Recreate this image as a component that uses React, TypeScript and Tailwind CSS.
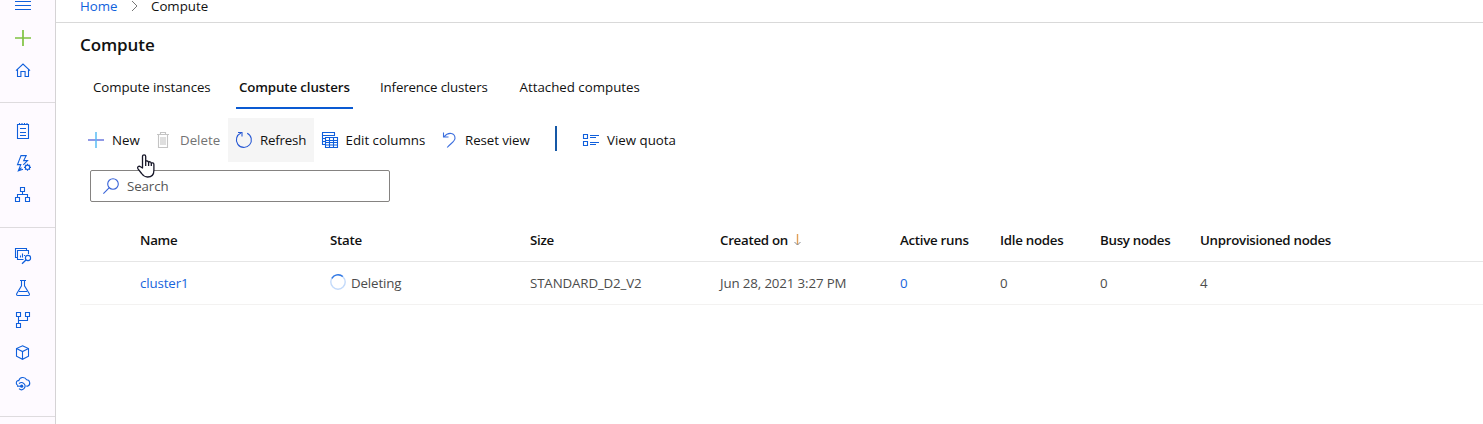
import type { ReactNode } from "react";

type IconProps = { children: ReactNode; className?: string };

function Icon({ children, className = "text-[#0f5fdc]" }: IconProps) {
  return (
    <svg
      width="16"
      height="16"
      viewBox="0 0 16 16"
      fill="none"
      stroke="currentColor"
      strokeWidth="1.1"
      className={`block shrink-0 overflow-visible ${className}`}
    >
      {children}
    </svg>
  );
}

const HomeIcon = () => (
  <Icon>
    <path d="M1 8.7 8 2l7 6.7M2.5 7.5v7h3.4V9.5h4.2v5h3.4v-7" />
  </Icon>
);

const NotebookIcon = () => (
  <Icon>
    <path d="M2.5 1.5h11v14h-11zM5 5.5h6M5 9.5h6M5 12.5h6" />
    <path d="M4.5 0v2M7 0v2M9.5 0v2M12 0v2" />
  </Icon>
);

const BoltIcon = () => (
  <Icon>
    <path d="M8 14.2 3.3 15.8 5.8 9.6H2.5L6 .6h5.2L8.7 5.6h3.8L8.3 9.8M3.3 15.8l3.2-3.2" />
    <circle cx="12.5" cy="12.3" r="2.2" />
    <path
      d="M12.5 8.8v1.3M12.5 14.5v1.3M9 12.3h1.3M14.7 12.3H16M10.1 9.9l.8.8M14.1 13.9l.8.8M10.1 14.7l.8-.8M14.1 10.7l.8-.8"
      strokeWidth="1.2"
    />
  </Icon>
);

const TreeIcon = () => (
  <Icon>
    <path d="M5.5.5h4v4h-4zM.5 10.5h4v4h-4zM10.5 10.5h4v4h-4zM7.5 4.5v3M2.5 10.5v-3h10v3" />
  </Icon>
);

const DataIcon = () => (
  <Icon>
    <path d="M2 9.5H.5v-9h11V2M8.5 11.5h-6v-9h11V6M5.5 9.5v-2M7.5 9.5v-4M9.5 8V7" />
    <circle cx="13" cy="10" r="2.6" />
    <path d="M11.2 11.8 7 15.8" strokeWidth="1.3" />
  </Icon>
);

const FlaskIcon = () => (
  <Icon>
    <path d="M5 .5h6M6.5.5v5.3L1.7 13.7q-.6 1.8 1.2 1.8h10.2q1.8 0 1.2-1.8L9.5 5.8V.5M4 11.5h8" />
  </Icon>
);

const PipelineIcon = () => (
  <Icon>
    <path d="M1.5.5h4v4h-4zM10.5.5h4v4h-4zM1.5 11.5h4v4h-4zM3.5 4.5v7M3.5 8.5h9v-4" />
  </Icon>
);

const CubeIcon = () => (
  <Icon>
    <path d="m7.5 1.8 6 2.8v7.6l-6 3.1-6-3.1V4.6zM1.5 4.6l6 3 6-3M7.5 7.6v7.7" />
  </Icon>
);

const CloudIcon = () => (
  <Icon>
    <path d="M3.2 9.5H3A2.6 2.6 0 0 1 3 4.6h.8a4.2 4.2 0 0 1 7.8-.8 3.3 3.3 0 0 1 1.2 6.3h-1.5" />
    <path d="M4 7.7a3.5 3.5 0 1 1 0 5" />
    <path d="M2 10.2h5" />
    <circle cx="6.7" cy="10.2" r="1.6" fill="currentColor" stroke="none" />
  </Icon>
);

function NavItem({ children }: { children: ReactNode }) {
  return <div className="flex h-8 items-center pl-[15px]">{children}</div>;
}

function Sidebar() {
  return (
    <nav className="flex h-full w-14 shrink-0 flex-col border-r border-[#d5d3d5] bg-[#fefaff]">
      <div className="h-[22px] pl-[15px]">
        <svg width="16" height="11" viewBox="0 0 16 11" className="block" stroke="#0f5fdc">
          <path d="M0 1.5h16M0 5.5h16M0 9.5h16" />
        </svg>
      </div>
      <div className="h-[81px] border-b border-[#dedbde]">
        <NavItem>
          <Icon className="text-[#7fc241]">
            <path d="M8 0v16M0 8h16" strokeWidth="1.7" />
          </Icon>
        </NavItem>
        <NavItem><HomeIcon /></NavItem>
      </div>
      <div className="h-[125px] border-b border-[#dedbde] pt-3">
        <NavItem><NotebookIcon /></NavItem>
        <NavItem><BoltIcon /></NavItem>
        <NavItem><TreeIcon /></NavItem>
      </div>
      <div className="h-[189px] border-b border-[#dedbde] pt-3">
        <NavItem><DataIcon /></NavItem>
        <NavItem><FlaskIcon /></NavItem>
        <NavItem><PipelineIcon /></NavItem>
        <NavItem><CubeIcon /></NavItem>
        <NavItem><CloudIcon /></NavItem>
      </div>
    </nav>
  );
}

function Breadcrumb() {
  return (
    <div className="flex h-[23px] items-start border-b border-[#d9d9d9] pl-6">
      <span className="w-[51px] text-[13.3px] leading-[13px] text-[#0f62dc]">Home</span>
      <svg width="7" height="12" viewBox="0 0 7 12" fill="none" stroke="#777" className="mr-[13px] block">
        <path d="m1 1 5 5-5 5" />
      </svg>
      <span className="text-[13.3px] leading-[13px] text-[#111]">Compute</span>
    </div>
  );
}

function Tabs() {
  return (
    <div className="flex h-11 items-stretch pl-[37px] text-[13.3px] leading-[42px]">
      <span className="w-[143px] tracking-[-0.08px]">Compute instances</span>
      <span className="-mt-px h-11 w-[117px] border-b-2 border-[#0a5ad2] pl-[3px] leading-[44px] font-semibold tracking-[-0.12px]">
        Compute clusters
      </span>
      <span className="ml-[27px] w-[139.5px] tracking-[-0.15px]">Inference clusters</span>
      <span>Attached computes</span>
    </div>
  );
}

function Label({ children }: { children: ReactNode }) {
  return <span className="pt-0.5 whitespace-nowrap">{children}</span>;
}

function Toolbar() {
  return (
    <div className="flex h-11 items-center pl-8 text-[13.3px]">
      <div className="flex w-[68px] items-center gap-2">
        <Icon>
          <path d="M0 8h16" stroke="#7d88e2" strokeWidth="1.7" />
          <path d="M8 0v16" stroke="#58bdf5" strokeWidth="1.5" />
        </Icon>
        <Label>New</Label>
      </div>
      <div className="flex w-[72px] items-center gap-[9px] text-[#737373]">
        <Icon className="-ml-px text-[#c4c4c4]">
          <path d="M2 2.5h12M5.5 2.5v-2h5v2M3.5 2.5v13h9v-13M6 5v8M8 5v8M10 5v8" />
        </Icon>
        <Label>Delete</Label>
      </div>
      <div className="flex h-11 w-[86px] items-center gap-2 bg-[#f5f5f5] pl-2">
        <Icon className="text-[#2859d4]">
          <path d="M11.2 1.2A7.5 7.5 0 1 1 5 1M2 .5h4v4" />
        </Icon>
        <span className="pt-0.5 tracking-[-0.2px]">Refresh</span>
      </div>
      <div className="flex w-[121px] items-center gap-[7.5px] pl-2">
        <Icon>
          <path d="M0 .5h13M.5 1v11.5H3M0 3.5h13M.5 6.5H3M.5 9.5H3" />
          <path d="M3.5 5.5h12v10h-12zM3.5 8.5h12M3.5 10.5h12M3.5 13h12M7.5 6v9.5M11.5 6v9.5" />
          <path d="M12.5 1v3" />
        </Icon>
        <Label>Edit columns</Label>
      </div>
      <div className="flex w-[120px] items-center gap-2 pl-1.5">
        <Icon className="text-[#3b6ede]">
          <path d="M2.5.5v4.5h5M2.8 5C7.5-.6 14 .8 14 6.3c0 3.2-4.4 5.2-7.8 9.2" />
        </Icon>
        <span className="pt-0.5 tracking-[-0.08px]">Reset view</span>
      </div>
      <div className="mb-[3px] h-[25px] w-[1.5px] bg-[#1558a6]" />
      <div className="ml-[26.5px] flex items-center gap-2">
        <Icon>
          <path d="M.5 2.5h4v4h-4zM.5 9.5h4v4h-4zM7 3.5h9M7 5.5h6M7 10.5h9M7 12.5h6" />
        </Icon>
        <Label>View quota</Label>
      </div>
    </div>
  );
}

function SearchBox() {
  return (
    <div className="mt-2 ml-[34px] flex h-8 w-[300px] items-center gap-2 rounded-[2px] border border-[#858381] pl-3 text-[13.3px] tracking-[-0.1px] text-[#555]">
      <Icon className="text-[#3863d8]">
        <circle cx="10" cy="6" r="5.3" />
        <path d="M6.3 9.7.4 15.6" />
      </Icon>
      <Label>Search</Label>
    </div>
  );
}

const columns = "grid grid-cols-[190px_200px_190px_180px_100px_100px_100px_1fr] items-center pl-[60px] pt-0.5";

function ClusterTable() {
  return (
    <div className="ml-6">
      <div className={`${columns} mt-[17px] h-[43px] border-b border-[#e6e6e6] text-[13.3px] font-semibold tracking-[-0.28px] text-[#111]`}>
        <span>Name</span>
        <span>State</span>
        <span>Size</span>
        <span className="flex items-center gap-1.5">
          Created on
          <svg width="7" height="12" viewBox="0 0 7 12" fill="none" className="-mt-0.5 block">
            <path d="M3.5 0v11" stroke="#e2a058" strokeWidth="1.4" />
            <path d="m.5 8 3 3 3-3" stroke="#858b94" />
          </svg>
        </span>
        <span>Active runs</span>
        <span>Idle nodes</span>
        <span>Busy nodes</span>
        <span>Unprovisioned nodes</span>
      </div>
      <div className={`${columns} h-[43px] border-b border-[#f3f2f1] text-[13.3px] tracking-[-0.13px] text-[#4c4c4c]`}>
        <span className="text-[#1765dc]">cluster1</span>
        <span className="flex items-center gap-[5px]">
          <svg width="16" height="16" viewBox="0 0 16 16" fill="none" strokeWidth="1.4" className="-mt-1 block">
            <circle cx="8" cy="8" r="7.2" stroke="#c3dafa" />
            <path d="M1.8 4.4A7.2 7.2 0 0 1 12.8 2.6" stroke="#3379e4" />
          </svg>
          Deleting
        </span>
        <span>STANDARD_D2_V2</span>
        <span>Jun 28, 2021 3:27 PM</span>
        <span className="text-[#1765dc]">0</span>
        <span>0</span>
        <span>0</span>
        <span>4</span>
      </div>
    </div>
  );
}

function HandCursor() {
  return (
    <svg
      width="18"
      height="24"
      viewBox="0 0 18 24"
      className="pointer-events-none absolute top-[154px] left-[137px]"
      fill="#fff"
      stroke="#171729"
      strokeWidth="1.3"
      strokeLinejoin="round"
    >
      <path d="M5.5 14V2.5c0-2.3 3.2-2.3 3.2 0v5.2c.3-1.1 2.8-1 2.9.7.5-1 2.6-.8 2.7.9.7-.8 2.6-.5 2.6 1.3v5.6c0 4.8-2.6 6.8-6.3 6.8-3 0-4.4-1.2-6-3.5L1 14.8c-1.1-2 1-3.3 2.5-2z" />
      <path d="M8.7 7.7V12M11.6 8.4V12M14.3 9.3V12" fill="none" />
    </svg>
  );
}

export default function App() {
  return (
    <div className="relative flex h-[424px] w-full overflow-hidden bg-white font-['Open_Sans','Noto_Sans',sans-serif] text-[#111]">
      <Sidebar />
      <main className="min-w-0 flex-1">
        <Breadcrumb />
        <h1 className="h-[43px] pl-6 text-[17px] leading-[43px] font-semibold tracking-[-0.1px]">Compute</h1>
        <Tabs />
        <div className="h-2" />
        <Toolbar />
        <SearchBox />
        <ClusterTable />
      </main>
      <HandCursor />
    </div>
  );
}
